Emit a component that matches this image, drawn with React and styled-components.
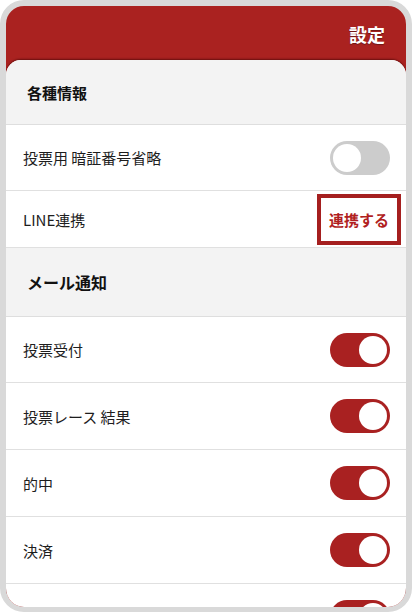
import React from 'react'
import styled, { createGlobalStyle } from 'styled-components'

const GlobalStyle = createGlobalStyle`
  html, body {
    margin: 0;
    padding: 0;
    background: #ffffff;
  }
  body {
    font-family: "Noto Sans CJK JP", "Noto Sans", sans-serif;
    color: #1e1e1e;
  }
`

const Frame = styled.div`
  box-sizing: border-box;
  width: 412px;
  height: 612px;
  border: 6px solid #d9d9d9;
  border-bottom-width: 5px;
  border-radius: 24px;
  background: #aa2220;
  overflow: hidden;
  display: flex;
  flex-direction: column;
`

const Header = styled.div`
  height: 54px;
  flex-shrink: 0;
  display: flex;
  align-items: center;
  justify-content: flex-end;
  padding: 0 21px 0 0;
  box-sizing: border-box;
`

const Title = styled.div`
  color: #ffffff;
  font-size: 18px;
  font-weight: 700;
  margin-top: 2px;
  text-shadow: 0 1px 1px rgba(0, 0, 0, 0.35);
`

const Card = styled.div`
  flex: 1;
  background: #ffffff;
  border-radius: 15px 15px 0 0;
  box-shadow: 0 -1px 2px rgba(60, 0, 0, 0.6);
  overflow: hidden;
`

const Section = styled.div`
  box-sizing: border-box;
  height: ${p => p.h}px;
  background: #f3f3f3;
  border-bottom: 1px solid #dedede;
  display: flex;
  align-items: center;
  padding-left: 21px;
  font-weight: 700;
  font-size: ${p => p.size}px;
  color: #111;
`

const Row = styled.div`
  box-sizing: border-box;
  height: ${p => p.h}px;
  border-bottom: 1px solid #e0e0e0;
  display: flex;
  align-items: center;
  justify-content: space-between;
  padding: 0 16px 0 17px;
  font-size: 15px;
`

const Label = styled.span`
  color: #1e1e1e;
`

const Track = styled.div`
  width: 60px;
  height: 34px;
  border-radius: 17px;
  background: ${p => (p.on ? '#a92121' : '#cccccc')};
  display: flex;
  align-items: center;
  justify-content: ${p => (p.on ? 'flex-end' : 'flex-start')};
  padding: 0 3px;
  box-sizing: border-box;
  margin-left: auto;
`

const Knob = styled.div`
  width: 28px;
  height: 28px;
  border-radius: 50%;
  background: #ffffff;
`

const LinkButton = styled.div`
  box-sizing: border-box;
  width: 84px;
  height: 51px;
  margin-right: -11px;
  border: 4px solid #a51f1f;
  display: flex;
  align-items: center;
  justify-content: center;
  color: #b11f1f;
  font-weight: 700;
  font-size: 15px;
`

const Toggle = ({ on }) => (
  <Track on={on}>
    <Knob />
  </Track>
)

export default function App() {
  return (
    <>
      <GlobalStyle />
      <Frame>
        <Header>
          <Title>設定</Title>
        </Header>
        <Card>
          <Section h={65} size={15}>各種情報</Section>
          <Row h={66}>
            <Label>投票用 暗証番号省略</Label>
            <Toggle on={false} />
          </Row>
          <Row h={57}>
            <Label>LINE連携</Label>
            <LinkButton>連携する</LinkButton>
          </Row>
          <Section h={69} size={16}>メール通知</Section>
          <Row h={66}>
            <Label>投票受付</Label>
            <Toggle on />
          </Row>
          <Row h={67}>
            <Label>投票レース 結果</Label>
            <Toggle on />
          </Row>
          <Row h={67}>
            <Label>的中</Label>
            <Toggle on />
          </Row>
          <Row h={67}>
            <Label>決済</Label>
            <Toggle on />
          </Row>
          <Row h={67}>
            <Toggle on />
          </Row>
        </Card>
      </Frame>
    </>
  )
}
